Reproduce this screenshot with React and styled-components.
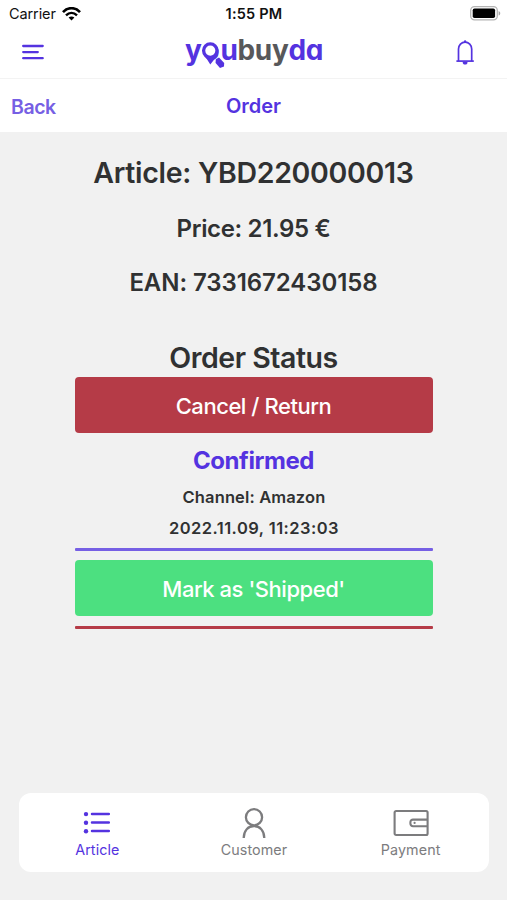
import React from "react";
import styled, { createGlobalStyle } from "styled-components";

const theme = {
	primary: "#5433e0",
	light: "#765fe4",
	dark: "#303132",
	danger: "#b53b47",
	success: "#4ce080",
	grey: "#7c7c7e",
	background: "#f1f1f1",
};

const tabs = [
	{ name: "Article", icon: ListIcon, active: true },
	{ name: "Customer", icon: PersonIcon },
	{ name: "Payment", icon: WalletIcon },
];

function WifiIcon() {
	return (
		<svg width="19" height="14" viewBox="0 0 19 14" fill="none" stroke="#000">
			<path d="M1 5.1C6-.1 13-.1 18 5.1" strokeWidth="2.7" />
			<path d="M4 8.4c3.3-3.3 7.7-3.3 11 0" strokeWidth="2.4" />
			<path d="M6.6 10.6c1.7-1.6 4.1-1.6 5.8 0L9.5 13.6z" fill="#000" stroke="none" />
		</svg>
	);
}

function BatteryIcon() {
	return (
		<svg width="31" height="15" viewBox="0 0 31 15">
			<rect x="0.7" y="0.7" width="26.6" height="13.2" rx="3.8" fill="#fff" stroke="#b4b4b4" strokeWidth="1.3" />
			<rect x="2.7" y="2.5" width="22.4" height="9.6" rx="1.8" fill="#000" />
			<path d="M28.6 5c2.2.8 2.2 3.8 0 4.6z" fill="#a5a5a5" />
		</svg>
	);
}

function MenuIcon() {
	return (
		<svg width="22" height="16" viewBox="0 0 22 16" stroke={theme.primary} strokeWidth="2.3" strokeLinecap="round">
			<path d="M1.2 2h19.5M1.2 8.1h14.6M1.2 14.2h19.5" />
		</svg>
	);
}

function BellIcon() {
	return (
		<svg width="18" height="25" viewBox="0 0 18 25" fill="none" stroke={theme.primary} strokeWidth="1.7">
			<path d="M2.5 21V9a6.6 6.9 0 0 1 13.2 0v12" />
			<path d="M.4 21.1h17.4" />
			<path d="M6.7 22a2.4 2.6 0 0 0 4.8 0z" fill={theme.primary} stroke="none" />
			<circle cx="9.1" cy="1.4" r="1.2" fill={theme.primary} stroke="none" />
		</svg>
	);
}

function LogoPin() {
	return (
		<svg width="26" height="29" viewBox="0 0 26 29">
			<path d="M2 13L9.3 24.6l7.4-9.6-2-2-5 3z" fill={theme.primary} />
			<circle cx="9.3" cy="10.6" r="6.7" fill="#fff" stroke={theme.primary} strokeWidth="3.3" />
			<path d="M14.8 19.2l3.2-1.8 5.2 5.6-.2 3.4-4 1.6-4.4-5z" fill={theme.primary} />
		</svg>
	);
}

function ListIcon() {
	return (
		<svg width="28" height="24" viewBox="0 0 28 24" fill="currentColor">
			<circle cx="3" cy="3.1" r="2.2" />
			<circle cx="3" cy="11.7" r="2.2" />
			<circle cx="3" cy="20.2" r="2.2" />
			<path d="M9 2.9h16.8M9 11.5h16.8M9 20h16.8" stroke="currentColor" strokeWidth="2.5" strokeLinecap="round" />
		</svg>
	);
}

function PersonIcon() {
	return (
		<svg width="24" height="32" viewBox="0 0 24 32" fill="none" stroke="currentColor" strokeWidth="2.3">
			<circle cx="12" cy="10.2" r="8.1" />
			<path d="M1.7 31c0-7 4.3-12 10.3-12s10.3 5 10.3 12" />
		</svg>
	);
}

function WalletIcon() {
	return (
		<svg width="36" height="28" viewBox="0 0 36 28" fill="none" stroke="currentColor" strokeWidth="2.1">
			<rect x="1.6" y="2" width="33" height="24" rx="1.5" />
			<path d="M34.5 10.6H20a2.6 2.6 0 0 0-2.6 2.6v1.4a2.6 2.6 0 0 0 2.6 2.6h14.5" />
			<circle cx="21.6" cy="13.9" r="1.1" fill="currentColor" stroke="none" />
		</svg>
	);
}

function Tab(props) {
	const { tab } = props;
	const Icon = tab.icon;

	return (
		<StyledTab $active={tab.active}>
			<StyledTabIcon>
				<Icon />
			</StyledTabIcon>
			<StyledTabLabel>{tab.name}</StyledTabLabel>
		</StyledTab>
	);
}

function App() {
	return (
		<StyledScreen>
			<GlobalStyle />
			<StyledStatusBar>
				<StyledCarrier>
					Carrier <WifiIcon />
				</StyledCarrier>
				<StyledTime>1:55 PM</StyledTime>
				<StyledBattery>
					<BatteryIcon />
				</StyledBattery>
			</StyledStatusBar>
			<StyledHeader>
				<MenuIcon />
				<StyledLogo>
					<StyledLogoPart>y</StyledLogoPart>
					<StyledLogoO>
						o
						<StyledPin>
							<LogoPin />
						</StyledPin>
					</StyledLogoO>
					<StyledLogoPart>u</StyledLogoPart>
					<StyledLogoPart $grey>buy</StyledLogoPart>
					<StyledLogoPart>da</StyledLogoPart>
				</StyledLogo>
				<BellIcon />
			</StyledHeader>
			<StyledNav>
				<StyledBack>Back</StyledBack>
				<StyledTitle>Order</StyledTitle>
			</StyledNav>
			<StyledMain>
				<StyledArticle>Article: YBD220000013</StyledArticle>
				<StyledDetail $tracking="-0.35px">Price: 21.95 €</StyledDetail>
				<StyledDetail $tracking="-0.07px">EAN: 7331672430158</StyledDetail>
				<StyledStatus>
					<StyledStatusH2>Order Status</StyledStatusH2>
					<StyledButton $color={theme.danger}>Cancel / Return</StyledButton>
					<StyledConfirmed>Confirmed</StyledConfirmed>
					<StyledInfo $tracking="0.13px">Channel: Amazon</StyledInfo>
					<StyledInfo $tracking="0.45px">2022.11.09, 11:23:03</StyledInfo>
					<StyledLine $color={theme.light} />
					<StyledButton $color={theme.success}>Mark as 'Shipped'</StyledButton>
					<StyledLine $color={theme.danger} $last />
				</StyledStatus>
			</StyledMain>
			<StyledTabBar>
				{tabs.map((tab) => (
					<Tab key={tab.name} tab={tab} />
				))}
			</StyledTabBar>
		</StyledScreen>
	);
}

const GlobalStyle = createGlobalStyle`
	* {
		box-sizing: border-box;
	}
	body {
		margin: 0;
		font-family: Inter, "Liberation Sans", sans-serif;
		color: ${theme.dark};
	}
	h1, h2, h3, p {
		margin: 0;
	}
	svg {
		display: block;
		flex: none;
	}
`;
const StyledScreen = styled.div`
	height: 900px;
	display: flex;
	flex-direction: column;
	overflow: hidden;
	background: ${theme.background};
`;
const StyledStatusBar = styled.div`
	height: 28px;
	padding: 0 6px 0 9px;
	display: grid;
	grid-template-columns: 1fr auto 1fr;
	align-items: center;
	background: white;
	color: #111;
	font-size: 14.5px;
	line-height: 26px;
`;
const StyledCarrier = styled.div`
	display: flex;
	align-items: center;
	gap: 6px;
	letter-spacing: -0.1px;
`;
const StyledTime = styled.div`
	margin-right: 2px;
	padding-bottom: 1px;
	font-weight: 600;
	font-size: 14.5px;
	letter-spacing: 0.2px;
`;
const StyledBattery = styled.div`
	justify-self: end;
	padding-bottom: 2px;
`;
const StyledHeader = styled.header`
	height: 51px;
	padding: 0 33px 2px 22px;
	display: flex;
	align-items: center;
	justify-content: space-between;
	background: white;
	border-bottom: 1px solid #f3f3f3;
`;
const StyledLogo = styled.div`
	display: flex;
	margin-left: 8px;
	padding-bottom: 5px;
	font-size: 28px;
	font-weight: 700;
	line-height: 34px;
	letter-spacing: -0.35px;
	font-feature-settings: "cv11";
`;
const StyledLogoPart = styled.span`
	color: ${(props) => (props.$grey ? "#58585a" : theme.primary)};
`;
const StyledLogoO = styled.span`
	position: relative;
	width: 19px;
	text-align: center;
	color: ${theme.primary};
`;
const StyledPin = styled.span`
	position: absolute;
	left: 0;
	top: 7px;
`;
const StyledNav = styled.nav`
	height: 53px;
	padding: 0 11px;
	display: grid;
	grid-template-columns: 1fr auto 1fr;
	align-items: center;
	background: white;
`;
const StyledBack = styled.span`
	padding-top: 2px;
	color: ${theme.light};
	font-size: 19.5px;
	font-weight: 600;
	letter-spacing: -0.45px;
`;
const StyledTitle = styled.h3`
	color: ${theme.primary};
	font-size: 20px;
	font-weight: 600;
`;
const StyledMain = styled.main`
	flex: 1;
	padding-top: 21px;
	display: flex;
	flex-direction: column;
	align-items: center;
`;
const StyledArticle = styled.h1`
	font-size: 28.5px;
	font-weight: 600;
	line-height: 40px;
	letter-spacing: -0.3px;
	white-space: nowrap;
`;
const StyledDetail = styled.h2`
	margin-top: 19px;
	font-size: 24px;
	font-weight: 600;
	line-height: 35px;
	letter-spacing: ${(props) => props.$tracking};

	&:first-of-type {
		margin-top: 18px;
	}
`;
const StyledStatus = styled.section`
	width: 358px;
	margin-top: 38px;
	display: flex;
	flex-direction: column;
	align-items: center;
`;
const StyledStatusH2 = styled.h2`
	font-size: 28.5px;
	font-weight: 600;
	line-height: 39px;
	letter-spacing: -0.45px;
`;
const StyledButton = styled.button`
	width: 100%;
	height: 56px;
	padding: 2px 0 0;
	border: none;
	border-radius: 4px;
	background: ${(props) => props.$color};
	color: white;
	font-family: inherit;
	font-size: 22px;
	font-weight: 500;
	letter-spacing: -0.46px;
`;
const StyledConfirmed = styled.h3`
	margin-top: 10px;
	color: ${theme.primary};
	font-size: 24px;
	font-weight: 700;
	line-height: 36px;
	letter-spacing: -0.42px;
`;
const StyledInfo = styled.p`
	margin-top: 4px;
	padding: 1px 0 0 1px;
	font-size: 16.5px;
	font-weight: 600;
	line-height: 26px;
	letter-spacing: ${(props) => props.$tracking};
`;
const StyledLine = styled.div`
	width: 100%;
	height: 3px;
	margin: ${(props) => (props.$last ? "10px 0 0" : "7px 0 9px")};
	border-radius: 1px;
	background: ${(props) => props.$color};
`;
const StyledTabBar = styled.footer`
	height: 79px;
	margin: 0 18px 28px 19px;
	display: grid;
	grid-template-columns: repeat(3, 1fr);
	border-radius: 12px;
	background: white;
`;
const StyledTab = styled.div`
	padding-top: 12px;
	display: flex;
	flex-direction: column;
	align-items: center;
	color: ${(props) => (props.$active ? theme.primary : theme.grey)};
`;
const StyledTabIcon = styled.div`
	height: 35px;
	display: flex;
	align-items: center;
`;
const StyledTabLabel = styled.span`
	font-size: 14.3px;
	line-height: 20px;
	letter-spacing: 0.1px;
`;
export default App;
